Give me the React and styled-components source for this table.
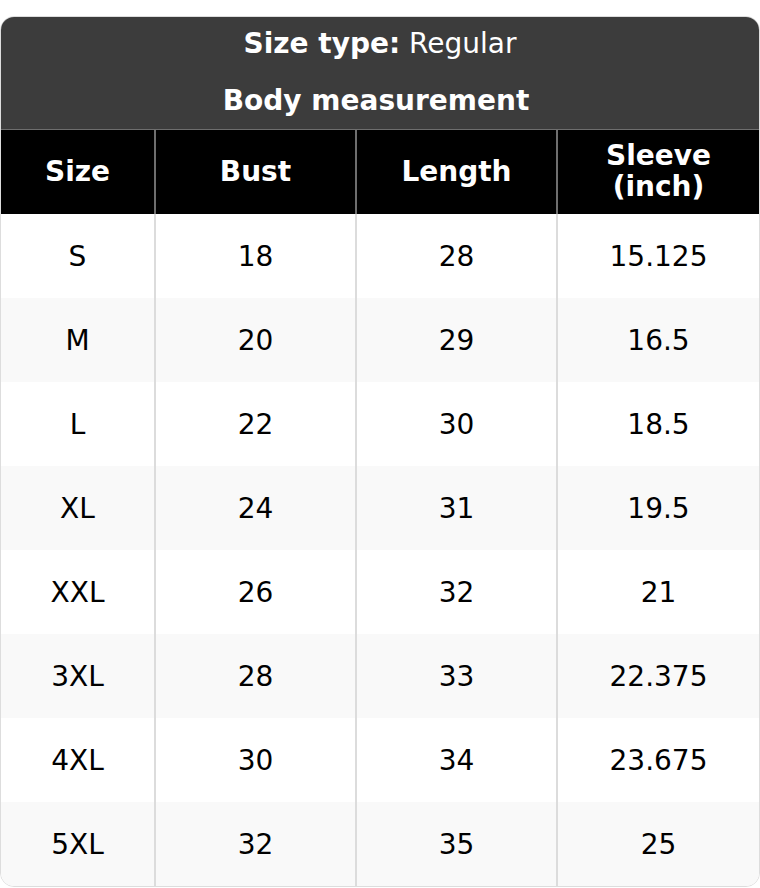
import React from 'react';
import styled, { createGlobalStyle } from 'styled-components';

const GlobalStyle = createGlobalStyle`
  html, body { margin: 0; padding: 0; background: #fff; }
  body { font-family: "DejaVu Sans", "Liberation Sans", sans-serif; }
`;

const rows = [
  ['S', '18', '28', '15.125'],
  ['M', '20', '29', '16.5'],
  ['L', '22', '30', '18.5'],
  ['XL', '24', '31', '19.5'],
  ['XXL', '26', '32', '21'],
  ['3XL', '28', '33', '22.375'],
  ['4XL', '30', '34', '23.675'],
  ['5XL', '32', '35', '25'],
];

const Page = styled.div`
  padding-top: 16px;
`;

const Card = styled.div`
  border: 1px solid #dddddd;
  border-radius: 14px;
  overflow: hidden;
  box-sizing: border-box;
  width: 760px;
`;

const Banner = styled.div`
  background: #3c3c3c;
  color: #fff;
  text-align: center;
  font-size: 28px;
  display: flex;
  flex-direction: column;
  border-bottom: 1px solid #6e6e6e;
`;

const BannerLine = styled.div`
  height: 56px;
  line-height: ${p => (p.$first ? '54px' : '56px')};
  font-weight: ${p => (p.$bold ? 700 : 400)};
  padding-right: ${p => (p.$bold ? '8px' : '0')};
`;

const Table = styled.table`
  width: 100%;
  border-collapse: collapse;
  table-layout: fixed;
`;

const Th = styled.th`
  background: #000;
  color: #fff;
  font-size: 28px;
  font-weight: 700;
  height: 84px;
  padding: 0 8px;
  line-height: 1.1;
  text-align: center;
  border-left: 2px solid #6e6e6e;
  &:first-child { border-left: none; }
`;

const Row = styled.tr`
  background: ${p => (p.$alt ? '#f9f9f9' : '#ffffff')};
`;

const Td = styled.td`
  height: 84px;
  padding: 0;
  font-size: 28px;
  color: #000;
  text-align: center;
  border-left: 2px solid #dcdcdc;
  &:first-child { border-left: none; }
`;

export default function App() {
  return (
    <Page>
      <GlobalStyle />
      <Card>
        <Banner>
          <BannerLine $first>
            <b>Size type:</b> Regular
          </BannerLine>
          <BannerLine $bold>Body measurement</BannerLine>
        </Banner>
        <Table>
          <colgroup>
            <col style={{ width: 154 }} />
            <col style={{ width: 201 }} />
            <col style={{ width: 201 }} />
            <col />
          </colgroup>
          <thead>
            <tr>
              <Th>Size</Th>
              <Th>Bust</Th>
              <Th>Length</Th>
              <Th>Sleeve<br />(inch)</Th>
            </tr>
          </thead>
          <tbody>
            {rows.map((r, i) => (
              <Row key={r[0]} $alt={i % 2 === 1}>
                {r.map((c, j) => (
                  <Td key={j}>{c}</Td>
                ))}
              </Row>
            ))}
          </tbody>
        </Table>
      </Card>
    </Page>
  );
}
